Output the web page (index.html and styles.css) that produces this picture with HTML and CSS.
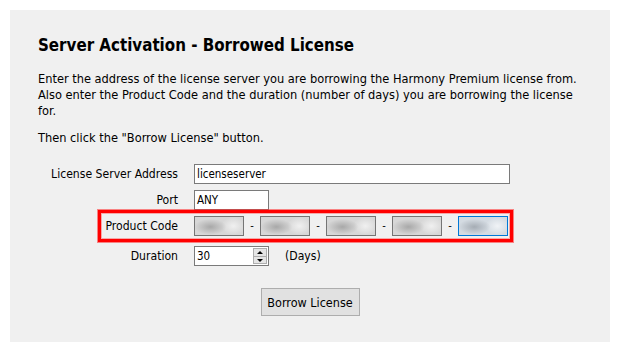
FILE: index.html
```html
<!DOCTYPE html>
<html lang="en">
<head>
<meta charset="utf-8">
<title>Server Activation - Borrowed License</title>
<link rel="stylesheet" href="styles.css">
</head>
<body>
<div class="panel">
  <h1 class="title">Server Activation - Borrowed License</h1>
  <p class="desc">Enter the address of the license server you are borrowing the Harmony Premium license from. Also enter the Product Code and the duration (number of days) you are borrowing the license for.</p>
  <p class="desc then">Then click the "Borrow License" button.</p>
  <div class="form">
    <div class="row">
      <span class="lbl">License Server Address</span>
      <span class="field wide">licenseserver</span>
    </div>
    <div class="row">
      <span class="lbl">Port</span>
      <span class="field short">ANY</span>
    </div>
    <div class="row code-row">
      <span class="lbl">Product Code</span>
      <div class="codes">
        <span class="field code"></span><span class="dash">-</span>
        <span class="field code"></span><span class="dash">-</span>
        <span class="field code"></span><span class="dash">-</span>
        <span class="field code"></span><span class="dash">-</span>
        <span class="field code focus"></span>
      </div>
    </div>
    <div class="row dur-row">
      <span class="lbl">Duration</span>
      <span class="field short spin">
        <span class="val">30</span>
        <span class="spinner">
          <span class="arrow up"></span>
          <span class="arrow down"></span>
        </span>
      </span>
      <span class="unit">(Days)</span>
    </div>
  </div>
  <div class="actions">
    <button class="btn" type="button">Borrow License</button>
  </div>
</div>
</body>
</html>
```

FILE: styles.css
```css
html, body {
  margin: 0;
  padding: 0;
  background: #ffffff;
}

body {
  font-family: "DejaVu Sans Condensed", "DejaVu Sans", sans-serif;
  color: #000;
}

.panel {
  margin: 10px;
  width: 600px;
  height: 332px;
  box-sizing: border-box;
  padding: 0 28px;
  background: #f0f0f0;
  display: flex;
  flex-direction: column;
}

.title {
  margin: 25px 0 0;
  font-size: 16.8px;
  line-height: 20px;
  font-weight: bold;
}

.desc {
  margin: 16px 0 0;
  font-size: 12.7px;
  line-height: 16px;
}

.desc.then {
  margin-top: 11px;
}

.form {
  margin-top: 18px;
  display: flex;
  flex-direction: column;
  gap: 6px;
  font-size: 12.1px;
}

.row {
  display: flex;
  align-items: center;
  height: 20px;
  gap: 16px;
}

.lbl {
  width: 140px;
  text-align: right;
  line-height: 20px;
  flex: none;
}

.field {
  box-sizing: border-box;
  height: 20px;
  border: 1px solid #7a7a7a;
  background: #ffffff;
  font-size: 11.5px;
  line-height: 18px;
  padding: 0 2px;
  display: flex;
  align-items: center;
  flex: none;
}

.field.wide { width: 316px; }
.field.short { width: 75px; }

.code-row {
  position: relative;
}

.code-row::before {
  content: "";
  position: absolute;
  left: 60px;
  width: 415px;
  top: -6px;
  bottom: -6px;
  border: 3px solid #ff0000;
  box-shadow: 0 0 0 1px rgba(255, 40, 40, 0.55), inset 0 0 0 1px rgba(255, 60, 60, 0.4);
  box-sizing: border-box;
  pointer-events: none;
}

.codes {
  display: flex;
  align-items: center;
}

.field.code {
  width: 50px;
  border-color: #757575;
  background:
    radial-gradient(ellipse 16px 8px at 32% 55%, rgba(168,168,168,1), rgba(168,168,168,0) 100%),
    radial-gradient(ellipse 12px 9px at 80% 50%, rgba(240,240,240,1), rgba(240,240,240,0) 100%),
    #d7d7d7;
}

.field.code.focus {
  border-color: #0078d7;
  background:
    radial-gradient(ellipse 16px 8px at 32% 55%, rgba(165,172,180,1), rgba(165,172,180,0) 100%),
    radial-gradient(ellipse 12px 9px at 80% 50%, rgba(240,243,246,1), rgba(240,243,246,0) 100%),
    #d4dbe2;
}

.dash {
  width: 16px;
  text-align: center;
  font-size: 11px;
  line-height: 20px;
}

.dur-row {
  margin-top: 4px;
}

.field.spin {
  justify-content: space-between;
  padding-right: 1px;
}

.spinner {
  width: 14px;
  height: 16px;
  display: flex;
  flex-direction: column;
  border: 1px solid #adadad;
  box-sizing: border-box;
  background: #e5e5e5;
}

.arrow {
  flex: 1;
  position: relative;
}

.arrow.up {
  border-bottom: 1px solid #adadad;
}

.arrow::after {
  content: "";
  position: absolute;
  left: 3px;
  top: 2px;
  border-left: 3px solid transparent;
  border-right: 3px solid transparent;
}

.arrow.up::after {
  border-bottom: 3px solid #000;
}

.arrow.down::after {
  top: 2px;
  border-top: 3px solid #000;
}

.unit {
  line-height: 20px;
}

.actions {
  margin-top: 22px;
  display: flex;
  justify-content: center;
}

.btn {
  width: 99px;
  height: 28px;
  border: 1px solid #adadad;
  background: #e1e1e1;
  font-family: inherit;
  font-size: 12.5px;
  color: #000;
  padding: 0;
}
```
